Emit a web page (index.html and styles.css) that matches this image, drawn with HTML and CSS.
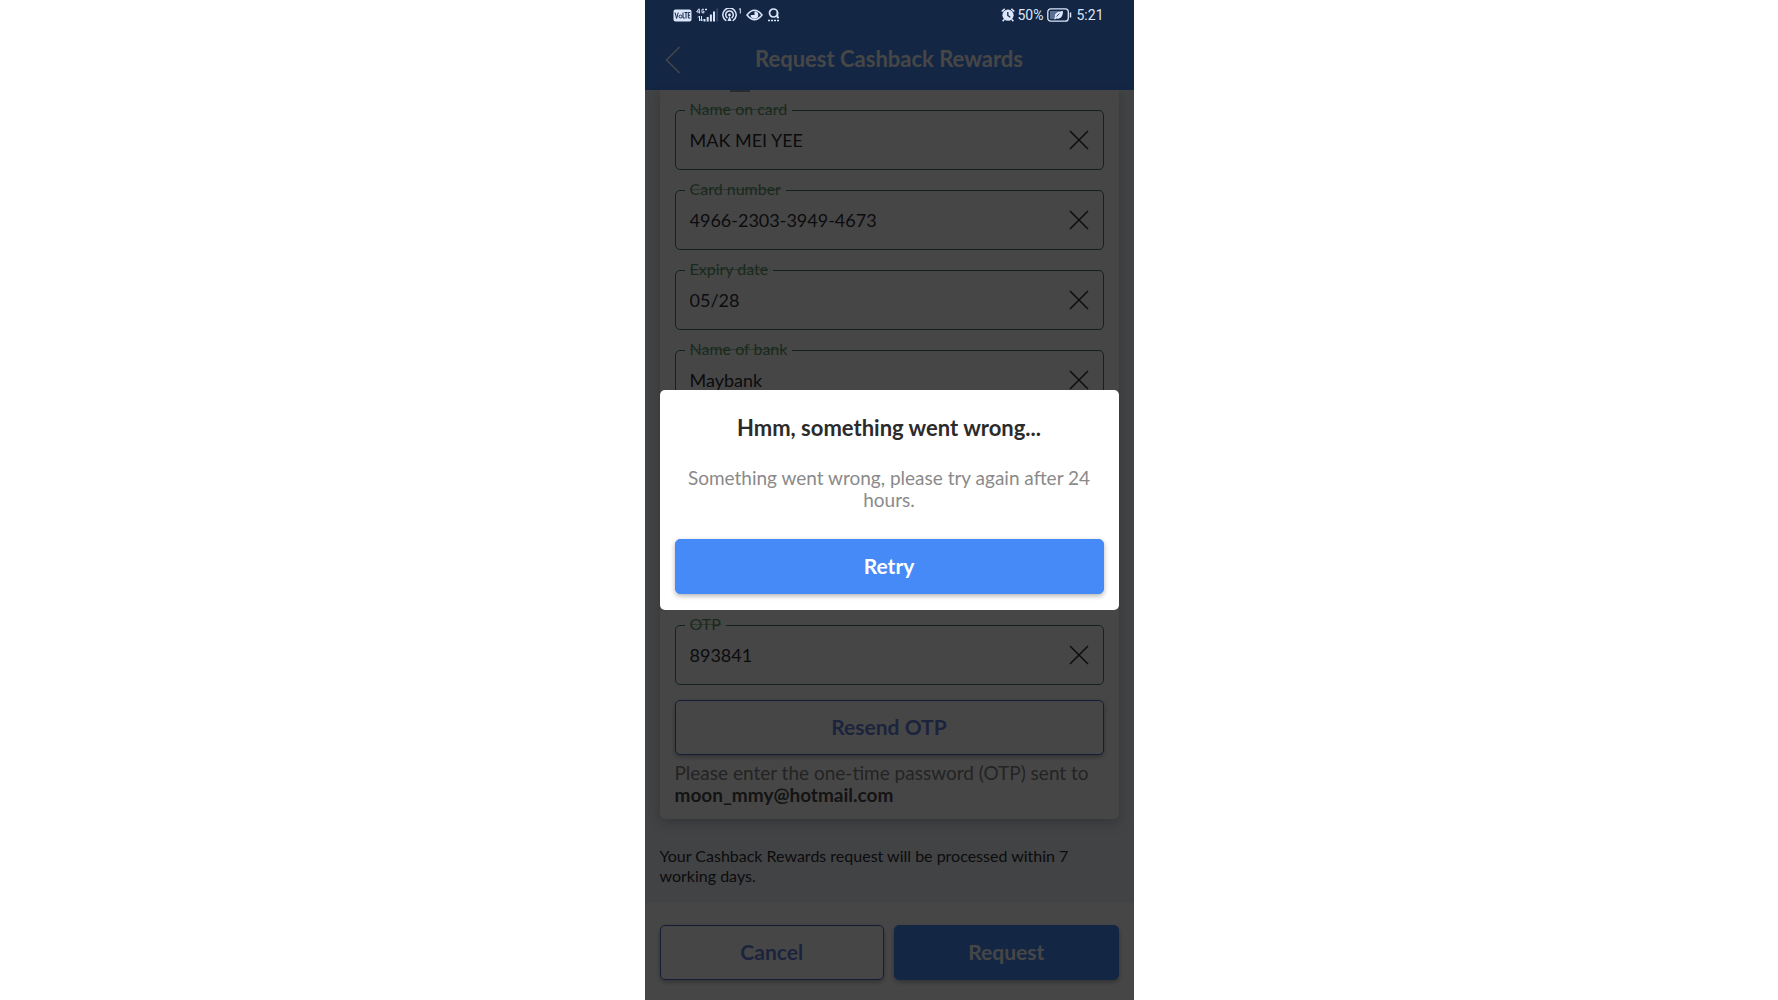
FILE: index.html
```html
<!DOCTYPE html>
<html lang="en">
  <head>
    <meta charset="UTF-8" />
    <meta name="viewport" content="width=device-width, initial-scale=1.0" />
    <title>Request Cashback Rewards</title>
    <link rel="stylesheet" href="styles.css">
  </head>
  <body>
    <div class="phone">
      <!-- Status bar -->
      <div class="status-bar">
        <div class="status-group">
          <svg width="19" height="13" viewBox="0 0 19 13">
            <rect x="0.5" y="0.5" width="18" height="12" rx="2" fill="#dbe6fa" />
            <path d="M2 3.5l1.6 6 1.6-6M10 3.500v5.500h1.800M11.500 3.500h3M13 3.500v6M17.300 3.500h-2v5.500h2M15.300 6.300h1.700" fill="none" stroke="#13274b" stroke-width="1" />
            <circle cx="7.500" cy="7.500" r="1.500" fill="none" stroke="#13274b" stroke-width="1" />
          </svg>
          <svg width="22" height="14" viewBox="0 0 22 14">
            <path d="M3 0.5L0.7 4h3.5M3.3 1v4.5M8 1.3H6v3.5h2V3.2H7M9 1.5h2M10 0.5v2" fill="none" stroke="#dbe6fa" />
            <path d="M3.5 8v5M2 9.5L3.5 8M5.5 8v5M4.5 11.5l1 1.5 1.5-1.5" fill="none" stroke="#dbe6fa" />
            <path d="M7.5 11h2v2.5h-2zM10.7 9h2v4.5h-2zM13.9 6.5h2v7h-2zM17 3.5h2v10h-2z" fill="#dbe6fa" />
            <path d="M20.5 0.5h1.2v13h-1.2z" fill="#42587b" />
          </svg>
          <svg width="20" height="14" viewBox="0 0 20 14">
            <g fill="none" stroke="#dbe6fa" stroke-width="1.5" stroke-linecap="round">
              <path d="M3.8 12.4a6.700 6.700 0 1 1 7.400 0" />
              <path d="M5 9.600a3.800 3.800 0 1 1 5 0" />
            </g>
            <circle cx="7.500" cy="7" r="1.400" fill="#dbe6fa" />
            <path d="M5.500 13l2-5 2 5z" fill="#dbe6fa" />
            <path d="M17 1.500l1.300-1v5" fill="none" stroke="#dbe6fa" />
          </svg>
          <svg width="17" height="12" viewBox="0 0 17 12">
            <path d="M1 6q7.500-9.500 15 0q-7.500 9.500-15 0z" fill="none" stroke="#dbe6fa" stroke-width="1.500" />
            <path d="M8.500 2.200a3.800 3.800 0 1 1-3.800 3.800h3.800z" fill="#dbe6fa" />
          </svg>
          <svg width="13" height="14" viewBox="0 0 13 14">
            <circle cx="6.500" cy="5" r="4" fill="none" stroke="#dbe6fa" stroke-width="1.700" />
            <path d="M10.500 4v5.500h1.500" fill="none" stroke="#dbe6fa" stroke-width="1.600" />
            <path d="M1 12.500h11" stroke="#dbe6fa" stroke-width="1.300" stroke-dasharray="2 1" />
          </svg>
        </div>
        <div class="status-group status-right">
          <svg width="14" height="14" viewBox="0 0 14 14">
            <circle cx="7" cy="7.200" r="5.600" fill="#dbe6fa" />
            <path d="M0.700 3.500l3-2.700M13.300 3.500l-3-2.700M3 11.500l-1.300 1.700M11 11.500l1.300 1.700" stroke="#dbe6fa" stroke-width="1.600" />
            <path d="M6.800 4v3.500l2.500 1.800" fill="none" stroke="#13274b" stroke-width="1.300" />
          </svg>
          <span>50%</span>
          <svg class="battery" width="25" height="14" viewBox="0 0 25 14">
            <rect x="0.800" y="0.800" width="20.500" height="12.400" rx="3" fill="none" stroke="#dbe6fa" stroke-width="1.300" />
            <path d="M3 3h9v8H3z" fill="#5c6f92" />
            <path d="M7 11l1-2c-1-4 3-5.500 8-6c0 5-2 8.500-6.500 7.200L8 11.500z" fill="#dbe6fa" />
            <path d="M9.500 8.500l3-3" stroke="#13274b" stroke-width="0.800" />
            <path d="M23.500 4.500v5" stroke="#dbe6fa" stroke-width="1.500" />
          </svg>
          <span>5:21</span>
        </div>
      </div>

      <!-- Navbar -->
      <header class="navbar">
        <button class="back-button" aria-label="Back">
          <svg width="16" height="28" viewBox="0 0 16 28">
            <path d="M14.500 1L1.500 14l13 13" fill="none" stroke="currentColor" stroke-width="1.500" />
          </svg>
        </button>
        <h1>Request Cashback Rewards</h1>
      </header>

      <!-- Card details -->
      <main class="content">
        <div class="card">
          <div class="card-peek"></div>
          <div class="fields">
            <div class="field">
              <label for="cardName">Name on card</label>
              <input type="text" id="cardName" value="MAK MEI YEE" />
              <button class="clear-button" aria-label="Clear name on card">
                <svg width="20" height="20" viewBox="0 0 20 20"><path d="M1 1l18 18M19 1L1 19" /></svg>
              </button>
            </div>
            <div class="field">
              <label for="cardNumber">Card number</label>
              <input type="text" id="cardNumber" value="4966-2303-3949-4673" />
              <button class="clear-button" aria-label="Clear card number">
                <svg width="20" height="20" viewBox="0 0 20 20"><path d="M1 1l18 18M19 1L1 19" /></svg>
              </button>
            </div>
            <div class="field">
              <label for="expiry">Expiry date</label>
              <input type="text" id="expiry" value="05/28" />
              <button class="clear-button" aria-label="Clear expiry date">
                <svg width="20" height="20" viewBox="0 0 20 20"><path d="M1 1l18 18M19 1L1 19" /></svg>
              </button>
            </div>
            <div class="field">
              <label for="bank">Name of bank</label>
              <input type="text" id="bank" value="Maybank" />
              <button class="clear-button" aria-label="Clear name of bank">
                <svg width="20" height="20" viewBox="0 0 20 20"><path d="M1 1l18 18M19 1L1 19" /></svg>
              </button>
            </div>
          </div>

          <!-- OTP -->
          <div class="otp-section">
            <div class="field">
              <label for="otp">OTP</label>
              <input type="text" id="otp" value="893841" />
              <button class="clear-button" aria-label="Clear OTP">
                <svg width="20" height="20" viewBox="0 0 20 20"><path d="M1 1l18 18M19 1L1 19" /></svg>
              </button>
            </div>
            <button class="button outline-button resend-button">Resend OTP</button>
            <p class="otp-help">Please enter the one-time password (OTP) sent to <strong>moon_mmy@hotmail.com</strong></p>
          </div>
        </div>
        <p class="note">Your Cashback Rewards request will be processed within 7 working days.</p>
      </main>

      <!-- Footer -->
      <footer class="footer">
        <button class="button outline-button">Cancel</button>
        <button class="button primary-button">Request</button>
      </footer>

      <!-- Error dialog -->
      <div class="overlay">
        <div class="modal" role="alertdialog" aria-labelledby="modalTitle" aria-describedby="modalText">
          <h2 id="modalTitle">Hmm, something went wrong...</h2>
          <p id="modalText">Something went wrong, please try again after 24 hours.</p>
          <button class="button primary-button">Retry</button>
        </div>
      </div>
    </div>
  </body>
</html>
```
FILE: styles.css
```css
* {
  box-sizing: border-box;
}

body {
  font-family: Lato, "Open Sans", sans-serif;
  margin: 0;
  background-color: white;
}

h1,
h2,
p {
  margin: 0;
}

button,
input {
  font-family: inherit;
}

.phone {
  position: relative;
  display: flex;
  flex-direction: column;
  max-width: 489px;
  min-height: 100vh;
  margin: 0 auto;
  background-color: #eff2f7;
  overflow: hidden;
}

/* Status bar stays bright over the overlay */
.status-bar {
  position: relative;
  z-index: 2;
  display: flex;
  justify-content: space-between;
  align-items: center;
  height: 30px;
  padding: 0 30px 0 28px;
  background-color: #132644;
  color: #dbe6fa;
  font-family: Roboto, sans-serif;
  font-size: 14px;
}

.status-group {
  display: flex;
  align-items: center;
  gap: 4px;
}

.status-right {
  gap: 3px;
}

.battery {
  margin-right: 2px;
}

/* Navbar */
.navbar {
  display: flex;
  align-items: center;
  height: 60px;
  padding: 0 20px;
  background-color: #468af7;
  color: white;
}

.navbar h1 {
  flex: 1;
  margin-right: 16px;
  padding-bottom: 2px;
  font-size: 22px;
  line-height: 24px;
  text-align: center;
}

.back-button,
.clear-button {
  display: flex;
  padding: 0;
  border: none;
  background: none;
  color: inherit;
  cursor: pointer;
}

/* Content */
.content {
  flex: 1;
  padding: 0 15px;
}

.card {
  padding: 0 15px 13px;
  border-radius: 0 0 6px 6px;
  background-color: white;
  box-shadow: 0 4px 12px rgba(60, 80, 120, 0.3);
}

.card-peek {
  width: 20px;
  height: 2px;
  margin: 0 0 18px 55px;
  background-color: #8ea0b8;
}

.fields {
  display: flex;
  flex-direction: column;
  gap: 20px;
}

.field {
  position: relative;
  display: flex;
  align-items: center;
  height: 60px;
  padding: 0 14px;
  border: 1px solid #4b8159;
  border-radius: 5px;
}

.field label {
  position: absolute;
  top: -12px;
  left: 9px;
  padding: 0 5px;
  background: linear-gradient(#a5c4ad, #a5c4ad) content-box center / 100% 1px no-repeat, white;
  color: #5b9a6c;
  font-size: 16px;
  line-height: 20px;
}

.field input {
  flex: 1;
  min-width: 0;
  padding: 0;
  border: none;
  outline: none;
  background: none;
  color: #2e2e36;
  font-size: 18px;
}

.clear-button path {
  fill: none;
  stroke: #2e2e2e;
  stroke-width: 1.5;
}

.otp-section {
  margin-top: 215px;
}

.otp-help {
  margin-top: 7px;
  color: #828282;
  font-size: 19px;
  line-height: 22px;
}

.otp-help strong {
  display: block;
  color: #4a4a4a;
}

.note {
  padding: 27px 0 16px;
  color: #2e2e36;
  font-size: 16px;
  line-height: 20px;
}

/* Buttons */
.button {
  height: 55px;
  padding: 0 6px 3px;
  border: 1px solid transparent;
  border-radius: 5px;
  font-size: 21px;
  font-weight: bold;
  box-shadow: 0 2px 5px rgba(0, 0, 0, 0.3);
  cursor: pointer;
}

.primary-button {
  border-color: #468af7;
  background-color: #468af7;
  color: white;
}

.outline-button {
  border-color: #4968c8;
  background-color: white;
  color: #6684dc;
}

.resend-button {
  width: 100%;
  margin-top: 15px;
}

.footer {
  display: flex;
  gap: 10px;
  padding: 22px 15px 20px;
  background-color: white;
}

.footer .button {
  flex: 1;
}

/* Dialog */
.overlay {
  position: absolute;
  inset: 0;
  z-index: 1;
  display: flex;
  align-items: center;
  justify-content: center;
  padding: 15px;
  background-color: rgba(0, 0, 0, 0.725);
}

.modal {
  display: flex;
  flex-direction: column;
  width: 100%;
  padding: 25px 15px 16px;
  border-radius: 5px;
  background-color: white;
  text-align: center;
}

.modal h2 {
  margin-bottom: 26px;
  color: #2b2b2b;
  font-size: 22px;
  line-height: 26px;
}

.modal p {
  margin-bottom: 28px;
  color: #8a8a8a;
  font-size: 19px;
  line-height: 22px;
}
```
